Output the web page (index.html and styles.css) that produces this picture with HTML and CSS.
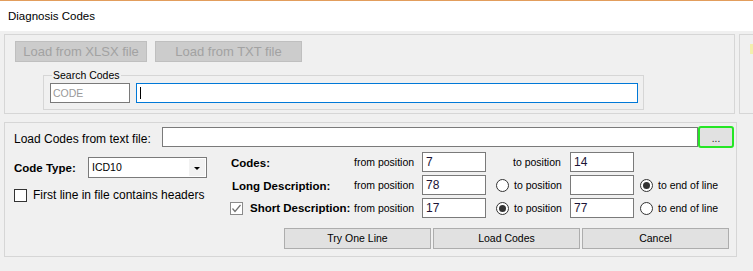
FILE: index.html
```html
<!DOCTYPE html>
<html lang="en">
<head>
  <meta charset="UTF-8">
  <meta name="viewport" content="width=device-width, initial-scale=1.0">
  <title>Diagnosis Codes</title>
  <link rel="stylesheet" href="styles.css">
</head>
<body>
  <div class="window">
    <!-- Title bar -->
    <div class="titlebar">Diagnosis Codes</div>

    <div class="content">
      <!-- Source + search -->
      <div class="top-row">
        <div class="panel source-panel">
          <div class="source-buttons">
            <div class="btn-disabled btn-xlsx">Load from XLSX file</div>
            <div class="btn-disabled btn-txt">Load from TXT file</div>
          </div>
          <fieldset class="search-group">
            <legend>Search Codes</legend>
            <div class="search-fields">
              <div class="code-box">CODE</div>
              <div class="search-box"><span class="caret"></span></div>
            </div>
          </fieldset>
        </div>
        <div class="panel side-panel"><span class="side-mark"></span></div>
      </div>

      <!-- Import from text file -->
      <div class="panel import-panel">
        <div class="file-row">
          <span class="file-label">Load Codes from text file:</span>
          <div class="textbox file-box"></div>
          <div class="browse-btn">...</div>
        </div>

        <div class="main-row">
          <div class="left-col">
            <div class="type-row">
              <span class="bold-label type-label">Code Type:</span>
              <div class="select">
                <span class="select-value">ICD10</span>
                <span class="select-arrow"><span class="triangle"></span></span>
              </div>
            </div>
            <div class="header-row">
              <span class="check-box"></span>
              <span class="header-label">First line in file contains headers</span>
            </div>
          </div>

          <div class="field-grid">
            <!-- Codes -->
            <div class="cell-name"><span class="bold-label">Codes:</span></div>
            <div class="pos-label">from position</div>
            <div class="textbox num-box">7</div>
            <div class="to-cell"><span class="pos-label no-radio">to position</span></div>
            <div class="textbox num-box">14</div>
            <div></div>

            <!-- Long Description -->
            <div class="cell-name"><span class="bold-label long-label">Long Description:</span></div>
            <div class="pos-label">from position</div>
            <div class="textbox num-box">78</div>
            <div class="to-cell"><span class="radio"></span><span class="pos-label">to position</span></div>
            <div class="textbox num-box"></div>
            <div class="end-cell"><span class="radio checked"></span><span class="pos-label">to end of line</span></div>

            <!-- Short Description -->
            <div class="cell-name short-cell">
              <span class="check-box checked">
                <svg width="11" height="11" viewBox="0 0 11 11"><polyline points="1.5,5.5 4,8.5 9.5,2" fill="none" stroke="#707070" stroke-width="1.2"/></svg>
              </span>
              <span class="bold-label">Short Description:</span>
            </div>
            <div class="pos-label">from position</div>
            <div class="textbox num-box">17</div>
            <div class="to-cell"><span class="radio checked"></span><span class="pos-label">to position</span></div>
            <div class="textbox num-box">77</div>
            <div class="end-cell"><span class="radio"></span><span class="pos-label">to end of line</span></div>
          </div>
        </div>

        <div class="action-row">
          <div class="btn">Try One Line</div>
          <div class="btn">Load Codes</div>
          <div class="btn">Cancel</div>
        </div>
      </div>
    </div>
  </div>
</body>
</html>
```

FILE: styles.css
```css
/* General Styling */
body {
  margin: 0;
  padding: 0;
  background-color: #f0f0f0;
  font-family: "Liberation Sans", Arial, sans-serif;
  color: #000;
  width: 753px;
  height: 271px;
  overflow: hidden;
}

.window {
  width: 753px;
}

/* Title bar */
.titlebar {
  height: 30px;
  border-top: 1px solid #e29d5c;
  background-color: #ffffff;
  padding-left: 8px;
  font-size: 11.5px;
  line-height: 30px;
}

.content {
  padding: 3px 0 0 4px;
}

.panel {
  box-sizing: border-box;
  border: 1px solid #d6d6d6;
}

/* Top row */
.top-row {
  display: flex;
  gap: 4px;
}

.source-panel {
  width: 733px;
  height: 80px;
  padding: 6px 0 0 10px;
}

.side-panel {
  flex: 1;
  height: 80px;
  border-right: none;
}

.side-mark {
  display: block;
  margin: 9px 0 0 10px;
  width: 3px;
  height: 10px;
  background-color: #f3efae;
}

.source-buttons {
  display: flex;
  gap: 8px;
}

.btn-disabled {
  box-sizing: border-box;
  height: 21px;
  background-color: #cccccc;
  border: 1px solid #bfbfbf;
  color: #a2a2a2;
  font-size: 13px;
  line-height: 19px;
  text-align: center;
}

.btn-xlsx {
  width: 132px;
}

.btn-txt {
  width: 147px;
}

/* Search group */
.search-group {
  box-sizing: border-box;
  width: 601px;
  height: 41px;
  margin: 7px 0 0 28px;
  padding: 2px 5px 0 6px;
  border: 1px solid #d6d6d6;
  min-width: 0;
}

.search-group legend {
  padding: 0 1px;
  margin-left: 2px;
  font-size: 10.5px;
  line-height: 12px;
}

.search-fields {
  display: flex;
  gap: 6px;
}

.code-box {
  box-sizing: border-box;
  width: 80px;
  height: 20px;
  border: 1px solid #7a7a7a;
  background-color: #fff;
  color: #9a9a9a;
  font-size: 10.5px;
  line-height: 18px;
  padding-left: 2px;
}

.search-box {
  box-sizing: border-box;
  flex: 1;
  height: 20px;
  border: 1px solid #0078d7;
  background-color: #fff;
  padding: 3px 0 0 3px;
}

.caret {
  display: block;
  width: 1px;
  height: 12px;
  background-color: #000;
}

/* Import panel */
.import-panel {
  width: 733px;
  height: 135px;
  margin-top: 8px;
  padding: 3px 2px 0 9px;
}

.textbox {
  box-sizing: border-box;
  height: 20px;
  border: 1px solid #7a7a7a;
  background-color: #fff;
}

.file-row {
  display: flex;
  align-items: center;
}

.file-label {
  width: 148px;
  font-size: 12px;
  padding-top: 4px;
}

.file-box {
  flex: 1;
}

.browse-btn {
  box-sizing: border-box;
  width: 36px;
  height: 22px;
  border: 2px solid #25e625;
  border-radius: 3px;
  background-color: #e1e1e1;
  font-size: 10px;
  line-height: 22px;
  text-align: center;
  color: #222;
}

.main-row {
  display: flex;
  margin-top: 4px;
}

.left-col {
  width: 216px;
  padding-top: 5px;
}

.bold-label {
  font-weight: bold;
  font-size: 11.5px;
}

.type-row {
  display: flex;
  align-items: center;
}

.type-label {
  width: 74px;
}

.select {
  box-sizing: border-box;
  display: flex;
  width: 119px;
  height: 21px;
  border: 1px solid #7a7a7a;
  background-color: #fff;
}

.select-value {
  flex: 1;
  font-size: 10.5px;
  line-height: 19px;
  padding-left: 3px;
}

.select-arrow {
  width: 16px;
  margin: 1px 1px 1px 0;
  background-color: #f2f2f2;
  display: flex;
  align-items: center;
  justify-content: center;
}

.triangle {
  width: 0;
  height: 0;
  margin-top: 2px;
  border-left: 3px solid transparent;
  border-right: 3px solid transparent;
  border-top: 3px solid #000;
}

.header-row {
  display: flex;
  align-items: center;
  gap: 6px;
  margin-top: 10px;
}

.header-label {
  font-size: 12px;
}

.check-box {
  box-sizing: border-box;
  width: 13px;
  height: 13px;
  border: 1px solid #333;
  background-color: #fff;
  display: inline-flex;
  align-items: center;
  justify-content: center;
}

.check-box.checked {
  border-color: #8a8a8a;
}

/* Position grid */
.field-grid {
  display: grid;
  grid-template-columns: 124px 68px 64px 84px 64px auto;
  grid-auto-rows: 20px;
  row-gap: 3px;
  align-items: center;
}

.cell-name {
  padding-left: 1px;
}

.long-label {
  padding-left: 1px;
}

.short-cell {
  display: flex;
  align-items: center;
  gap: 7px;
  padding-left: 0;
}

.pos-label {
  font-size: 10.5px;
}

.num-box {
  font-size: 12px;
  line-height: 16px;
  padding: 1px 3px 0;
  color: #1c1436;
}

.to-cell {
  display: flex;
  align-items: center;
  gap: 5px;
  padding-left: 10px;
}

.no-radio {
  padding-left: 17px;
}

.end-cell {
  display: flex;
  align-items: center;
  gap: 5px;
  padding-left: 6px;
}

.radio {
  box-sizing: border-box;
  width: 13px;
  height: 13px;
  border: 1px solid #333;
  border-radius: 50%;
  background-color: #fff;
  display: inline-flex;
  align-items: center;
  justify-content: center;
}

.radio.checked::after {
  content: "";
  width: 7px;
  height: 7px;
  border-radius: 50%;
  background-color: #333;
}

/* Actions */
.action-row {
  display: flex;
  justify-content: flex-end;
  gap: 2px;
  margin-top: 10px;
  padding-right: 5px;
}

.btn {
  box-sizing: border-box;
  width: 147px;
  height: 21px;
  background-color: #e1e1e1;
  border: 1px solid #adadad;
  font-size: 10.5px;
  line-height: 19px;
  text-align: center;
}
```
